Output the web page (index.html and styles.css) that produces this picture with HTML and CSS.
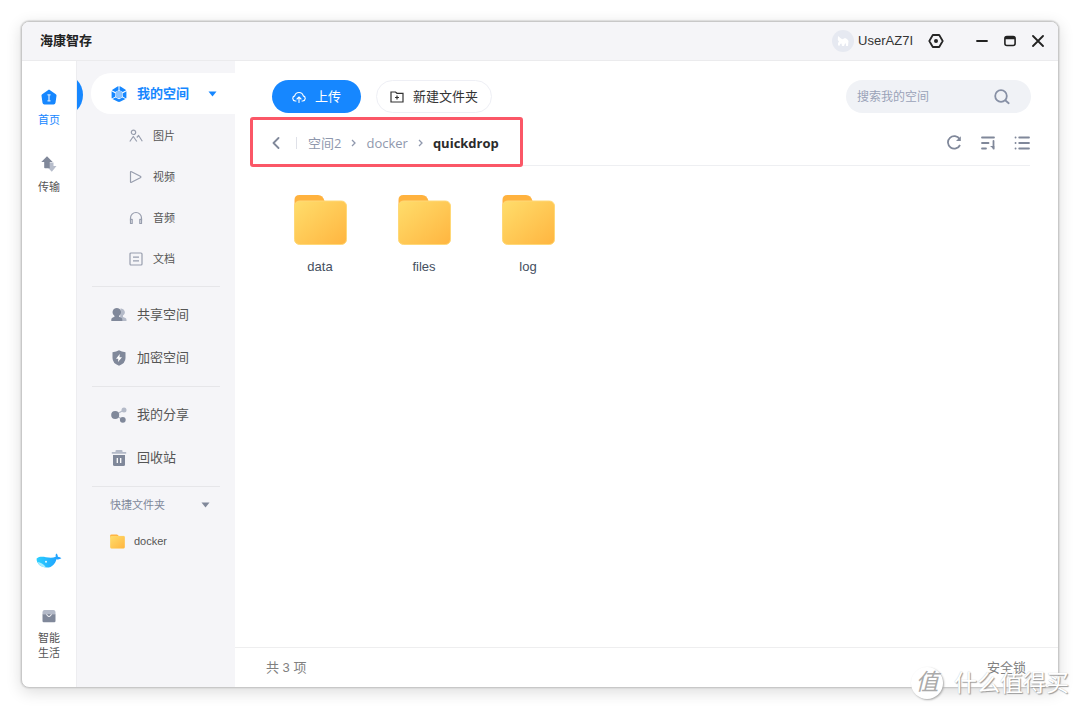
FILE: index.html
```html
<!DOCTYPE html>
<html lang="zh-CN">
<head>
  <meta charset="UTF-8" />
  <meta name="viewport" content="width=device-width, initial-scale=1" />
  <title>海康智存</title>
  <link rel="stylesheet" href="styles.css">
</head>
<body>

<!-- shared folder drawing -->
<svg class="defs" width="0" height="0" aria-hidden="true">
  <defs>
    <linearGradient id="folderFill" x1="0" y1="0" x2="1" y2="1">
      <stop offset="0" stop-color="#ffdd6b"/>
      <stop offset="1" stop-color="#ffb540"/>
    </linearGradient>
    <linearGradient id="whaleFill" x1="0" y1="0" x2="1" y2="0">
      <stop offset="0" stop-color="#2bd0ff"/>
      <stop offset="1" stop-color="#1f9bff"/>
    </linearGradient>
    <symbol id="folder" viewBox="0 0 53 50">
      <path d="M.5 12V5q0-5 5-5H24q5 0 6.500 6v6z" fill="#ffb23e"/>
      <rect x="0.500" y="6" width="52" height="43.500" rx="5" fill="url(#folderFill)" stroke="#ffd878" stroke-width="1"/>
    </symbol>
  </defs>
</svg>

<div class="window">
  <header class="titlebar">
    <h1>海康智存</h1>
    <div class="user">
      <span class="avatar">
        <svg width="12" height="12" viewBox="0 0 12 12" fill="#fff"><path d="M1 1l3 2.500 1.500.7L8 3l2 1 1.500 2-.5 5H9V8.500H8L7 11H5L4.500 8.500 3 9v1.500H1V8l1-1.500L.8 5z"/></svg>
      </span>
      <span>UserAZ7I</span>
    </div>
    <button type="button" class="win-btn" aria-label="设置">
      <svg width="16" height="14" viewBox="0 0 16 14"><path d="M4.800 1h6.400L14.700 7l-3.500 6H4.800L1.300 7z" fill="none" stroke="#262626" stroke-width="1.800" stroke-linejoin="round"/><circle cx="8" cy="7" r="2" fill="#262626"/></svg>
    </button>
    <div class="win-controls">
      <button type="button" class="win-btn" aria-label="最小化">
        <svg width="12" height="12" viewBox="0 0 12 12"><path d="M1 6h10" stroke="#222" stroke-width="1.800" stroke-linecap="round"/></svg>
      </button>
      <button type="button" class="win-btn" aria-label="最大化">
        <svg width="12" height="12" viewBox="0 0 12 12"><rect x="0.900" y="1.500" width="10.200" height="9" rx="2" fill="none" stroke="#222" stroke-width="1.600"/><path d="M1 3h10" stroke="#222" stroke-width="2.400"/></svg>
      </button>
      <button type="button" class="win-btn" aria-label="关闭">
        <svg width="12" height="12" viewBox="0 0 12 12"><path d="M1 1l10 10M11 1L1 11" stroke="#222" stroke-width="1.800" stroke-linecap="round"/></svg>
      </button>
    </div>
  </header>

  <div class="content">
    <nav class="rail">
      <a href="#" class="rail-item active">
        <svg width="16" height="16" viewBox="0 0 16 16"><path d="M8 .5l6.800 4.700q.9.600.7 1.600l-1 7q-.3 1.700-1.900 1.700H3.400q-1.600 0-1.900-1.700l-1-7q-.2-1 .7-1.600z" fill="#1687ff"/><path d="M8 6v5.500M6.900 5.800h2.200M6.900 11.800h2.200" stroke="#cfe5ff" stroke-width="1.300" stroke-linecap="round"/></svg>
        首页
      </a>
      <a href="#" class="rail-item">
        <svg width="16" height="16" viewBox="0 0 16 16"><path d="M8.500 6.500h4v3.500h3l-4.700 5.700L6.200 11h2.300z" fill="#b7bdcb"/><path d="M6 .3L11.700 6H8.800v5.500q0 .8-.8.800H4q-.8 0-.8-.8V6H.3z" fill="#80889a"/></svg>
        传输
      </a>
      <a href="#" class="rail-item whale" aria-label="助手">
        <svg width="26" height="16" viewBox="0 0 26 16"><path d="M.6 5.500C3 3.400 6.500 3.600 10 4.200c3.500.5 6.500.8 9.800-.4-.4-1.300-.2-2.400.5-3.300 1 .6 1.500 1.700 1.600 3.200 1.300.2 2.600.7 3.500 1.600-1.500 1.100-3.300 1.300-5 .9-1.200 4.500-4 8.300-9.400 8.300C5 14.500.2 10.500.6 5.500z" fill="url(#whaleFill)"/><path d="M1.500 9c3 .2 6 1.800 8.500 5.400C6 14.500 2.500 12 1.500 9z" fill="#a8ecff"/><circle cx="10" cy="8.800" r="1" fill="#e8f9ff"/></svg>
      </a>
      <a href="#" class="rail-item">
        <svg width="14" height="14" viewBox="0 0 14 14"><path d="M2.500 1h9q1.800 0 2 2v2.500H.5V3q.2-2 2-2z" fill="#b4bac8"/><path d="M.5 5.200h13V12q0 1.200-1.200 1.200H1.700Q.5 13.200.5 12z" fill="#80889a"/><path d="M4.700 5.200q.3 2.300 2.300 2.300t2.300-2.300" fill="#80889a" stroke="#fff" stroke-width="1"/></svg>
        <span>智能<br>生活</span>
      </a>
    </nav>

    <aside class="sidebar">
      <a href="#" class="space-current">
        <svg width="16" height="16" viewBox="0 0 16 16"><path d="M7.500.2v4L4.200 6 .9 4.300q.1-.4.500-.6L6.500.5q.5-.3 1-.3zM8.500.2v4L11.800 6l3.300-1.700q-.1-.4-.5-.6L9.500.5q-.5-.3-1-.3zM.6 5.300L4 7.200v3.600L.9 12.500q-.3-.3-.3-.9zM15.400 5.300L12 7.200v3.600l3.100 1.700q.3-.3.3-.9zM1.500 13.100l3.100-1.700L8 13.300l3.400-1.900 3.100 1.700-5 2.500q-1.500.6-3 0z" fill="#1687ff"/><circle cx="8" cy="8.500" r="3.800" fill="#8bc3ff"/></svg>
        <span>我的空间</span>
        <svg class="caret" width="9" height="6" viewBox="0 0 9 6"><path d="M.5.500h8L4.500 5.500z" fill="#1687ff"/></svg>
      </a>
      <ul class="sub-list">
        <li><a href="#">
          <svg width="14" height="14" viewBox="0 0 14 14" class="line"><circle cx="4.500" cy="3.300" r="2.200"/><path d="M.8 12.500L4.300 7.500l3.500 5M7.800 8.500L9.600 6.500l3.700 5.800"/></svg>图片</a></li>
        <li><a href="#">
          <svg width="14" height="14" viewBox="0 0 14 14" class="line"><path d="M1.500 2.200v9.600q0 1 1 .5l8.800-4.600q1.200-.7 0-1.400L2.500 1.700q-1-.5-1 .5z"/></svg>视频</a></li>
        <li><a href="#">
          <svg width="14" height="14" viewBox="0 0 14 14" class="line"><path d="M1.500 9.500V7a5.500 5.500 0 0 1 11 0v2.500"/><path d="M1.500 8.300h1.700v4.200H1.500zM10.800 8.300h1.700v4.200h-1.700z"/></svg>音频</a></li>
        <li><a href="#">
          <svg width="14" height="14" viewBox="0 0 14 14" class="line"><rect x="1" y="1" width="12" height="12" rx="1"/><path d="M4 5.200h6M4 8.800h6"/></svg>文档</a></li>
      </ul>
      <hr>
      <ul class="main-list">
        <li><a href="#">
          <svg width="16" height="16" viewBox="0 0 16 16"><path d="M9.500 1.500a3.800 3.800 0 0 1 2.500 7v1.500l2.500 1q1 .5 1 1.700V14H9z" fill="#b4bac8"/><path d="M5.800 1a4.200 4.200 0 0 1 2.600 7.500q-.4.400-.3 1.300l2.200 1q1 .5 1 1.600V14H.3v-1.600q0-1.100 1-1.600l2.200-1q.1-.9-.3-1.300A4.200 4.200 0 0 1 5.800 1z" fill="#80889a"/></svg>共享空间</a></li>
        <li><a href="#">
          <svg width="16" height="16" viewBox="0 0 16 16"><path d="M8 .3q2.700 1.700 6.500 1.900V8q0 5.300-6.500 7.800Q1.500 13.300 1.500 8V2.200Q5.300 2 8 .3z" fill="#80889a"/><path d="M8.800 4L5 8.800h2.300L7 12l4-4.800H8.500z" fill="#fff"/></svg>加密空间</a></li>
      </ul>
      <hr>
      <ul class="main-list">
        <li><a href="#">
          <svg width="16" height="16" viewBox="0 0 16 16"><path d="M4 8l9-5M4 8l8 4.700" stroke="#b4bac8" stroke-width="1.300"/><circle cx="4.200" cy="8" r="4" fill="#80889a"/><circle cx="13" cy="3" r="2.500" fill="#b4bac8"/><circle cx="11.800" cy="12.800" r="2.900" fill="#80889a"/></svg>我的分享</a></li>
        <li><a href="#">
          <svg width="16" height="16" viewBox="0 0 16 16"><path d="M4.500 2V.8Q4.600 0 5.500 0h5q.9 0 1 .8V2h3.700v1.700H.8V2z" fill="#b4bac8"/><path d="M2 5h12v9.500q0 1.500-1.500 1.500h-9Q2 16 2 14.500z" fill="#80889a"/><path d="M6.300 8v5M9.700 8v5" stroke="#fff" stroke-width="1.300"/></svg>回收站</a></li>
      </ul>
      <hr>
      <button type="button" class="quick-head">快捷文件夹
        <svg width="9" height="6" viewBox="0 0 9 6"><path d="M.5.500h8L4.500 5.500z" fill="#80889a"/></svg>
      </button>
      <a href="#" class="quick-item">
        <svg width="15" height="15"><use href="#folder"/></svg>
        docker
      </a>
    </aside>

    <main>
      <div class="toolbar">
        <button type="button" class="btn upload">
          <svg width="14" height="14" viewBox="0 0 14 14" fill="none" stroke="#fff" stroke-width="1.100" stroke-linecap="round" stroke-linejoin="round"><path d="M4 11H3.200A2.600 2.600 0 0 1 2.700 5.900a4.400 4.400 0 0 1 8.600 0 2.600 2.600 0 0 1-.5 5.100H10M7 12.500V7.200M5 9l2-2 2 2"/></svg>
          上传
        </button>
        <button type="button" class="btn new-folder">
          <svg width="14" height="12" viewBox="0 0 14 12" fill="none" stroke="#333" stroke-width="1.200"><path d="M1 1h4.500L7 2.300h6V11H1zM7 4.500v4M5 6.500h4"/></svg>
          新建文件夹
        </button>
        <form class="search">
          <input type="text" placeholder="搜索我的空间" aria-label="搜索我的空间">
          <button type="button" aria-label="搜索">
            <svg width="16" height="16" viewBox="0 0 16 16" fill="none" stroke="#8790a5" stroke-width="1.800" stroke-linecap="round"><circle cx="7" cy="7" r="5.800"/><path d="M11.500 11.500l3.200 2.700"/></svg>
          </button>
        </form>
      </div>

      <div class="path-row">
        <nav class="crumbs">
          <button type="button" class="back" aria-label="返回">
            <svg width="8" height="12" viewBox="0 0 8 12" fill="none" stroke="#80889a" stroke-width="1.800" stroke-linecap="round" stroke-linejoin="round"><path d="M6.500 1l-5 5 5 5"/></svg>
          </button>
          <a href="#">空间2</a>
          <svg width="5" height="8" viewBox="0 0 5 8" class="sep"><path d="M1 1l3 3-3 3"/></svg>
          <a href="#">docker</a>
          <svg width="5" height="8" viewBox="0 0 5 8" class="sep"><path d="M1 1l3 3-3 3"/></svg>
          <strong>quickdrop</strong>
          <span class="highlight"></span>
        </nav>
        <div class="view-tools">
          <button type="button" aria-label="刷新">
            <svg width="16" height="16" viewBox="0 0 16 16" fill="none" stroke="#80889a" stroke-width="1.800"><path d="M13.600 4A6.300 6.300 0 1 0 14 10"/><path d="M14.800 1.200v4.800H10z" fill="#80889a" stroke="none"/></svg>
          </button>
          <button type="button" aria-label="排序">
            <svg width="16" height="16" viewBox="0 0 16 16" fill="none" stroke="#80889a" stroke-width="1.800" stroke-linecap="round"><path d="M2 2.500h12M2 8h6.500M2 13.500h4M13.500 6v7.500"/><path d="M14.300 14.500L10 11h4.300z" fill="#80889a" stroke="none"/></svg>
          </button>
          <button type="button" aria-label="列表视图">
            <svg width="16" height="16" viewBox="0 0 16 16" fill="none" stroke="#80889a" stroke-width="1.800" stroke-linecap="round"><path d="M5.200 2.500h9.800M5.200 8h9.800M5.200 13.500h9.800M1.500 2.500h.1M1.500 8h.1M1.500 13.500h.1"/></svg>
          </button>
        </div>
      </div>

      <ul class="files">
        <li><a href="#"><svg width="53" height="50"><use href="#folder"/></svg>data</a></li>
        <li><a href="#"><svg width="53" height="50"><use href="#folder"/></svg>files</a></li>
        <li><a href="#"><svg width="53" height="50"><use href="#folder"/></svg>log</a></li>
      </ul>

      <footer class="statusbar">
        <span>共 3 项</span>
        <a href="#">安全锁</a>
      </footer>
    </main>
  </div>
</div>

<div class="watermark"><span class="badge">值</span>什么值得买</div>

</body>
</html>
```
FILE: styles.css
```css
* {
  box-sizing: border-box;
}
body {
  margin: 0;
  padding: 21px;
  min-height: 100vh;
  display: flex;
  position: relative;
  background: #fff;
  color: #555;
  font-family: "Liberation Sans", "Noto Sans CJK SC", sans-serif;
  font-size: 13px;
  line-height: 20px;
}
a {
  color: inherit;
  text-decoration: none;
}
ul {
  list-style: none;
  margin: 0;
  padding: 0;
}
button {
  font: inherit;
  color: inherit;
  border: none;
  background: none;
  padding: 0;
  cursor: pointer;
}
svg {
  display: block;
  flex: none;
}
.defs {
  position: absolute;
}
.window {
  flex: 1;
  display: flex;
  flex-direction: column;
  border: 1px solid #c8c8c8;
  border-radius: 8px;
  overflow: hidden;
  background: #fff;
  box-shadow: 0 0 1px 1px #dcdcdc, 0 4px 16px rgba(0,0,0,0.14);
}

/* title bar */
.titlebar {
  display: flex;
  align-items: center;
  height: 39px;
  padding: 0 6px 0 18px;
  background: #f5f5f8;
  border-bottom: 1px solid #ebebed;
}
.titlebar h1 {
  margin: 0 auto 0 0;
  font-size: 13px;
  color: #222;
}
.user {
  display: flex;
  align-items: center;
  gap: 4px;
  margin-right: 9px;
  color: #333;
}
.avatar {
  width: 22px;
  height: 22px;
  border-radius: 50%;
  background: #e6e9f1;
  display: grid;
  place-items: center;
}
.win-btn {
  width: 28px;
  height: 28px;
  display: grid;
  place-items: center;
}
.win-controls {
  display: flex;
  margin-left: 18px;
}
.content {
  flex: 1;
  display: flex;
}

/* left rail */
.rail {
  width: 54px;
  padding: 28px 0 26px;
  display: flex;
  flex-direction: column;
  align-items: center;
  gap: 28px;
}
.rail-item {
  display: flex;
  flex-direction: column;
  align-items: center;
  gap: 8px;
  font-size: 11px;
  line-height: 15px;
}
.rail-item.active {
  color: #1687ff;
}
.whale {
  margin-top: auto;
  margin-bottom: 12px;
}

/* sidebar */
.sidebar {
  position: relative;
  width: 159px;
  padding: 12px 0 12px 14px;
  background: #f5f5f8;
  border-left: 1px solid #ededf0;
}
.sidebar::before {
  content: "";
  position: absolute;
  left: 0;
  top: 19px;
  width: 6px;
  height: 30px;
  background: #1687ff;
  clip-path: circle(22px at -16px 50%);
}
.space-current {
  display: flex;
  align-items: center;
  gap: 10px;
  height: 41px;
  margin-bottom: 1px;
  padding: 0 18px 0 20px;
  border-radius: 20px 0 0 20px;
  background: #fff;
  color: #1687ff;
  font-weight: bold;
}
.caret {
  margin-left: auto;
}
.sub-list a {
  display: flex;
  align-items: center;
  gap: 10px;
  height: 41px;
  padding-left: 38px;
  font-size: 11px;
}
.line {
  fill: none;
  stroke: #989eae;
  stroke-width: 1.2;
  stroke-linejoin: round;
}
.sidebar hr {
  margin: 7px 15px 6px 1px;
  border: none;
  border-top: 1px solid #e6e6e9;
}
.main-list a {
  display: flex;
  align-items: center;
  gap: 10px;
  height: 43px;
  padding-left: 20px;
}
.quick-head {
  display: flex;
  align-items: center;
  justify-content: space-between;
  width: 100%;
  height: 24px;
  padding: 0 25px 0 19px;
  font-size: 11px;
  color: #80889a;
}
.quick-item {
  display: flex;
  align-items: center;
  gap: 9px;
  height: 48px;
  padding-left: 19px;
  font-size: 11px;
}

/* main area */
main {
  flex: 1;
  display: flex;
  flex-direction: column;
}
.toolbar {
  display: flex;
  gap: 15px;
  padding: 19px 27px 0 37px;
}
.btn {
  display: flex;
  align-items: center;
  gap: 9px;
  height: 33px;
  padding: 0 20px;
  border-radius: 17px;
}
.upload {
  background: #1687ff;
  color: #fff;
}
.new-folder {
  padding: 0 13px;
  border: 1px solid #eeeff5;
  color: #333;
}
.search {
  display: flex;
  align-items: center;
  width: 185px;
  height: 33px;
  margin-left: auto;
  padding: 0 21px 0 11px;
  border-radius: 17px;
  background: #f0f2f6;
}
.search input {
  flex: 1;
  min-width: 0;
  padding: 0;
  border: none;
  outline: none;
  background: none;
  font: inherit;
  font-size: 12px;
}
.search input::placeholder {
  color: #9aa2b8;
}
.path-row {
  display: flex;
  align-items: center;
  justify-content: space-between;
  height: 53px;
  margin: 0 28px 0 37px;
  padding-top: 8px;
  border-bottom: 1px solid #eeeff2;
}
.crumbs {
  position: relative;
  display: flex;
  align-items: center;
  gap: 10px;
  color: #8f98ad;
  font-family: "Open Sans", "Noto Sans CJK SC", sans-serif;
}
.crumbs strong {
  color: #2b2b2b;
  font-weight: bold;
}
.back {
  padding-right: 16px;
  border-right: 1px solid #dfe1e8;
  margin-right: 1px;
}
.sep {
  fill: none;
  stroke: #8f98ad;
  stroke-width: 1.3;
}
.highlight {
  position: absolute;
  inset: -16px -24px -14px -22px;
  border: 3px solid #fb5767;
  border-radius: 3px;
  pointer-events: none;
}
.view-tools {
  display: flex;
  gap: 18px;
}
.files {
  flex: 1;
  display: flex;
  flex-wrap: wrap;
  align-content: flex-start;
  padding: 29px 28px 0 33px;
}
.files a {
  width: 104px;
  display: flex;
  flex-direction: column;
  align-items: center;
  gap: 12px;
  color: #45505f;
}
.statusbar {
  display: flex;
  align-items: center;
  justify-content: space-between;
  height: 40px;
  padding: 0 32px 0 31px;
  border-top: 1px solid #eeeeef;
  color: #808080;
}

/* site mark over the corner */
.watermark {
  position: absolute;
  right: 11px;
  bottom: 9px;
  display: flex;
  align-items: center;
  gap: 11px;
  color: #fff;
  font-size: 23px;
  line-height: 34px;
  text-shadow: 1px 1px 1px #999, 0 0 1px #bbb;
}
.badge {
  width: 32px;
  height: 32px;
  border-radius: 50%;
  background: #fff;
  box-shadow: 1px 1px 2px #aaa;
  color: #aaa;
  text-align: center;
  line-height: 30px;
  font-style: italic;
  text-shadow: none;
}
```
